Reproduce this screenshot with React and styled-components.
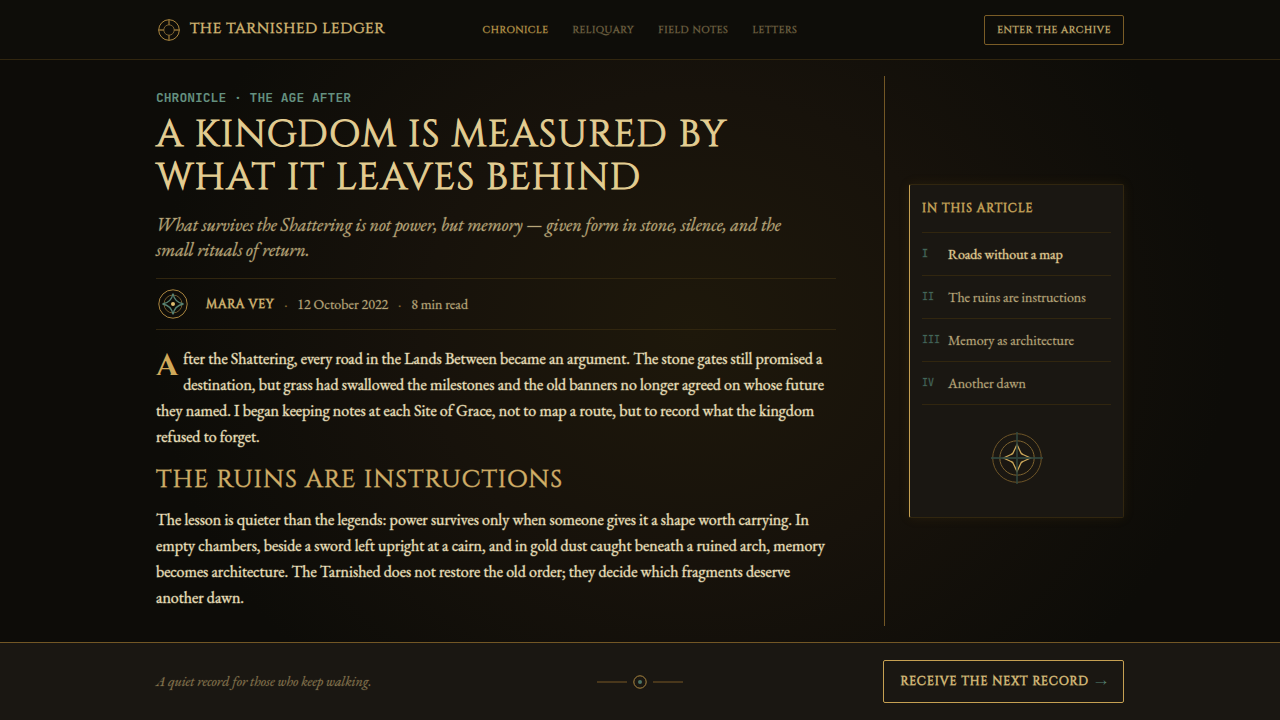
import React from "react";
import styled, { createGlobalStyle, css } from "styled-components";

const serif = '"EB Garamond", "Liberation Serif", serif';
const display = 'Cinzel, "Liberation Serif", serif';
const mono = '"JetBrains Mono", "Liberation Mono", monospace';

const ink = (strength) => css`
  -webkit-text-stroke: 1px color-mix(in srgb, currentColor ${strength}%, transparent);
`;

const Global = createGlobalStyle`
  *, *::before, *::after { box-sizing: border-box; }
  body {
    margin: 0;
    background: #0e0d09;
    color: #ede0bc;
    font-family: ${serif};
  }
  h1, h2, p, ol { margin: 0; padding: 0; }
  a { color: inherit; text-decoration: none; }
  button { cursor: pointer; }
`;

const Page = styled.div`
  min-height: 100vh;
  display: flex;
  flex-direction: column;
  background: radial-gradient(ellipse 42% 66% at 54% 46%, #1e180b 0%, #17120b 50%, #0d0c08 100%);
`;

const Container = styled.div`
  width: 100%;
  max-width: 1000px;
  margin: 0 auto;
  padding: 0 16px;
`;

const Header = styled.header`
  background: #0e0d09;
  border-bottom: 1px solid #31260f;
`;

const HeaderRow = styled(Container)`
  height: 59px;
  display: grid;
  grid-template-columns: 1fr auto 1fr;
  align-items: center;
`;

const Brand = styled.a`
  display: flex;
  align-items: center;
  gap: 8px;
  color: #d9bb76;
  font: 400 15px/24px ${display};
  letter-spacing: 0.04em;
  white-space: nowrap;
  ${ink(60)}
`;

const BrandName = styled.span`
  padding-bottom: 2px;
`;

const Nav = styled.nav`
  display: flex;
  gap: 24px;
`;

const NavLink = styled.a`
  color: ${(p) => (p.$active ? "#cda752" : "#7d6d4a")};
  font: 400 10px/16px ${display};
  letter-spacing: 0.06em;
  ${ink(40)}
`;

const OutlineButton = styled.button`
  justify-self: end;
  display: flex;
  align-items: center;
  gap: 6px;
  height: ${(p) => (p.$large ? "43px" : "30px")};
  padding: 0 ${(p) => (p.$large ? "16px" : "12px")};
  border: 1px solid ${(p) => (p.$large ? "#c6a052" : "#7a5c26")};
  border-radius: 2px;
  background: transparent;
  color: #dcc07c;
  font: 400 ${(p) => (p.$large ? "12px/17px" : "10px/16px")} ${display};
  letter-spacing: ${(p) => (p.$large ? "0.08em" : "0.06em")};
  white-space: nowrap;
  ${(p) => ink(p.$large ? 70 : 40)}
`;

const Arrow = styled.span`
  padding-top: 2px;
  color: #568273;
  font-family: ${serif};
  letter-spacing: 0;
  -webkit-text-stroke: 0;
`;

const Main = styled.main`
  flex: 1;
  display: flex;
  padding: 16px 0;
`;

const Columns = styled(Container)`
  display: grid;
  grid-template-columns: minmax(0, 1fr) 240px;
  column-gap: 48px;
`;

const Article = styled.article`
  align-self: center;
`;

const Eyebrow = styled.p`
  color: #64907f;
  font: 700 13px/14px ${mono};
`;

const Title = styled.h1`
  margin-top: 8px;
  color: #e3cd92;
  font: 400 38px/43px ${display};
  letter-spacing: 1px;
  ${ink(100)}
`;

const Deck = styled.p`
  max-width: 640px;
  margin-top: 13px;
  color: #b8a679;
  font: italic 400 18px/25px ${serif};
  ${ink(30)}
`;

const Byline = styled.div`
  display: flex;
  align-items: center;
  gap: 10px;
  height: 52px;
  margin: 16px 0;
  border: solid #31260f;
  border-width: 1px 0;
  color: #b8a679;
  font-size: 14px;
  ${ink(25)}
`;

const Author = styled.span`
  margin-left: 6px;
  color: #d9bb76;
  font: 400 12px/16px ${display};
  letter-spacing: 0.06em;
  ${ink(70)}
`;

const Dot = styled.span`
  color: #947336;
`;

const Text = styled.p`
  color: #ede0bc;
  font: 400 16px/26px ${serif};
  ${ink(40)}
`;

const DropCap = styled.span`
  float: left;
  margin-right: 5px;
  padding-top: 4px;
  color: #d0a95a;
  font: 700 31px/32px ${display};
  -webkit-text-stroke: 0;
`;

const Heading = styled.h2`
  margin: 14px 0 12px;
  color: #d3b068;
  font: 400 25px/31px ${display};
  letter-spacing: 1px;
  ${ink(70)}
`;

const Aside = styled.aside`
  display: flex;
  align-items: center;
  padding-left: 24px;
  border-left: 1px solid #735725;
`;

const Contents = styled.nav`
  width: 100%;
  padding: 12px 12px 31px;
  border: 1px solid #31260f;
  border-left-color: #c6a052;
  border-radius: 2px;
  background: #1a1712;
  box-shadow: 0 0 12px rgba(150, 110, 30, 0.12);
`;

const ContentsTitle = styled.h2`
  padding-bottom: 12px;
  color: #cda95b;
  font: 400 12px/23px ${display};
  letter-spacing: 0.08em;
  ${ink(70)}
`;

const ContentsList = styled.ol`
  list-style: none;
  border-top: 1px solid #31260f;
`;

const ContentsLink = styled.a`
  display: grid;
  grid-template-columns: 18px 1fr;
  column-gap: 8px;
  align-items: center;
  height: 43px;
  border-bottom: 1px solid #31260f;
  color: ${(p) => (p.$active ? "#e3cd92" : "#b8a679")};
  font-size: 14px;
  line-height: 16px;
  ${(p) => ink(p.$active ? 40 : 25)}
`;

const Numeral = styled.span`
  color: #44675a;
  font: 400 10px/16px ${mono};
`;

const Crest = styled.div`
  display: flex;
  justify-content: center;
  padding-top: 25px;
`;

const Footer = styled.footer`
  background: #1a1712;
  border-top: 1px solid #735725;
`;

const FooterRow = styled(Container)`
  height: 77px;
  display: grid;
  grid-template-columns: 1fr auto 1fr;
  align-items: center;
`;

const Motto = styled.p`
  color: #85744e;
  font: italic 400 14px/21px ${serif};
  ${ink(20)}
`;

const BrandMark = () => (
  <svg width="26" height="26" viewBox="0 0 26 26" fill="none" stroke="#a9853f" aria-hidden="true">
    <circle cx="13" cy="13" r="10.3" />
    <circle cx="13" cy="13" r="5.2" stroke="#79602f" />
    <path d="M13 2v6M13 18v6M2 13h6M18 13h6" strokeWidth="1.4" stroke="#8c6e35" />
  </svg>
);

const AuthorMark = () => (
  <svg width="34" height="34" viewBox="0 0 34 34" fill="none" aria-hidden="true">
    <circle cx="17" cy="17" r="14.2" stroke="#a9853f" />
    <circle cx="17" cy="17" r="9" stroke="#70592c" />
    <path d="M17 6.5Q18.500 15.500 27.500 17Q18.500 18.500 17 27.500Q15.500 18.500 6.500 17Q15.500 15.500 17 6.500Z" stroke="#568273" strokeWidth="1.300" />
    <circle cx="17" cy="17" r="2" fill="#dfbd70" />
  </svg>
);

const CrestMark = () => (
  <svg width="56" height="56" viewBox="0 0 56 56" fill="none" aria-hidden="true">
    <circle cx="28" cy="28" r="24.300" stroke="#6d5427" />
    <circle cx="28" cy="28" r="17.200" stroke="#7e632f" />
    <path d="M28 14.500L31.500 22Q32 24 34 24.500L41.500 28L34 31.500Q32 32 31.500 34L28 41.500L24.500 34Q24 32 22 31.500L14.500 28L22 24.500Q24 24 24.500 22Z" stroke="#cda95b" strokeWidth="1.300" />
    <path d="M28 2v52M2 28h52" stroke="#31483f" strokeWidth="1.800" opacity=".85" />
  </svg>
);

const Ornament = () => (
  <svg width="86" height="16" viewBox="0 0 86 16" fill="none" aria-hidden="true">
    <path d="M0 8h30M56 8h30" stroke="#49371b" strokeWidth="2" />
    <circle cx="43" cy="8" r="6.200" stroke="#a9853f" />
    <circle cx="43" cy="8" r="2" fill="#4b7465" />
  </svg>
);

const sections = [
  ["I", "Roads without a map"],
  ["II", "The ruins are instructions"],
  ["III", "Memory as architecture"],
  ["IV", "Another dawn"],
];

export default function App() {
  return (
    <Page>
      <Global />
      <Header>
        <HeaderRow>
          <Brand href="#"><BrandMark /><BrandName>THE TARNISHED LEDGER</BrandName></Brand>
          <Nav aria-label="Primary">
            <NavLink href="#chronicle" $active aria-current="page">CHRONICLE</NavLink>
            <NavLink href="#reliquary">RELIQUARY</NavLink>
            <NavLink href="#notes">FIELD NOTES</NavLink>
            <NavLink href="#letters">LETTERS</NavLink>
          </Nav>
          <OutlineButton type="button">ENTER THE ARCHIVE</OutlineButton>
        </HeaderRow>
      </Header>
      <Main>
        <Columns>
          <Article>
            <Eyebrow>CHRONICLE · THE AGE AFTER</Eyebrow>
            <Title>A KINGDOM IS MEASURED BY WHAT IT LEAVES BEHIND</Title>
            <Deck>
              What survives the Shattering is not power, but memory — given form in stone, silence, and the small
              rituals of return.
            </Deck>
            <Byline>
              <AuthorMark />
              <Author>MARA VEY</Author>
              <Dot>·</Dot>
              <time dateTime="2022-10-12">12 October 2022</time>
              <Dot>·</Dot>
              <span>8 min read</span>
            </Byline>
            <Text>
              <DropCap>A</DropCap>fter the Shattering, every road in the Lands Between became an argument. The stone
              gates still promised a destination, but grass had swallowed the milestones and the old banners no longer
              agreed on whose future they named. I began keeping notes at each Site of Grace, not to map a route, but
              to record what the kingdom refused to forget.
            </Text>
            <Heading>THE RUINS ARE INSTRUCTIONS</Heading>
            <Text>
              The lesson is quieter than the legends: power survives only when someone gives it a shape worth carrying.
              In empty chambers, beside a sword left upright at a cairn, and in gold dust caught beneath a ruined arch,
              memory becomes architecture. The Tarnished does not restore the old order; they decide which fragments
              deserve another dawn.
            </Text>
          </Article>
          <Aside>
            <Contents aria-label="In this article">
              <ContentsTitle>IN THIS ARTICLE</ContentsTitle>
              <ContentsList>
                {sections.map(([numeral, label], i) => (
                  <li key={numeral}>
                    <ContentsLink href={`#section-${i + 1}`} $active={i === 0}>
                      <Numeral>{numeral}</Numeral>
                      {label}
                    </ContentsLink>
                  </li>
                ))}
              </ContentsList>
              <Crest><CrestMark /></Crest>
            </Contents>
          </Aside>
        </Columns>
      </Main>
      <Footer>
        <FooterRow>
          <Motto>A quiet record for those who keep walking.</Motto>
          <Ornament />
          <OutlineButton type="button" $large>
            RECEIVE THE NEXT RECORD <Arrow>→</Arrow>
          </OutlineButton>
        </FooterRow>
      </Footer>
    </Page>
  );
}
